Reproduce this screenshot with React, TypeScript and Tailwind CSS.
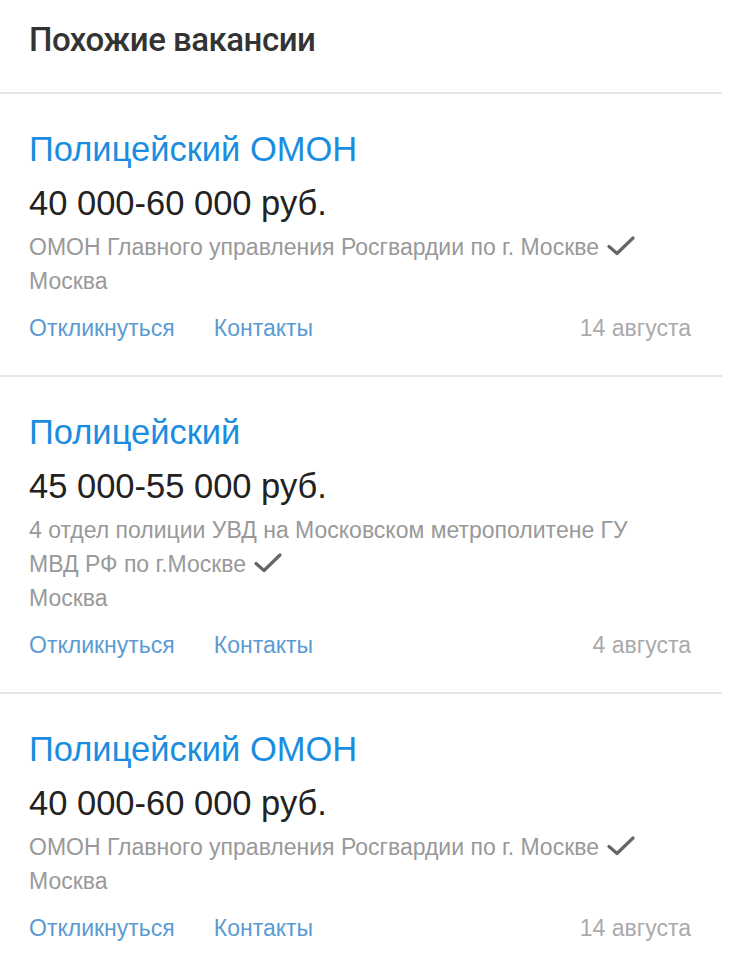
const jobs = [
  {
    title: "Полицейский ОМОН",
    salary: "40 000-60 000 руб.",
    company: "ОМОН Главного управления Росгвардии по г. Москве",
    city: "Москва",
    date: "14 августа",
  },
  {
    title: "Полицейский",
    salary: "45 000-55 000 руб.",
    company: "4 отдел полиции УВД на Московском метрополитене ГУ МВД РФ по г.Москве",
    city: "Москва",
    date: "4 августа",
  },
  {
    title: "Полицейский ОМОН",
    salary: "40 000-60 000 руб.",
    company: "ОМОН Главного управления Росгвардии по г. Москве",
    city: "Москва",
    date: "14 августа",
  },
];

function Check() {
  return (
    <svg
      className="inline-block w-[28px] h-[22px] ml-[8px] -mt-[6px] align-middle"
      viewBox="0 0 28 22"
      fill="none"
    >
      <path
        d="M2 11.5 L10 18.5 L26 3"
        stroke="#666666"
        strokeWidth="3.2"
        strokeLinecap="round"
        strokeLinejoin="round"
      />
    </svg>
  );
}

export default function App() {
  return (
    <div className="w-[750px] min-h-[966px] bg-white font-['Liberation_Sans',Arial,sans-serif]">
      <div className="w-[722px]">
        <div className="h-[92px] pl-[29px] pt-[20px]">
          <h2 className="font-['Roboto',sans-serif] font-medium text-[33px] leading-[40px] text-[#333333] tracking-[-0.5px]">
            Похожие вакансии
          </h2>
        </div>
        {jobs.map((job, i) => (
          <div key={i} className="border-t-2 border-[#e6e6e6] pl-[29px] pr-[31px] pt-[28px] pb-[30px]">
            <div className="text-[34.5px] leading-[54px] text-[#1b8de0]">{job.title}</div>
            <div className="text-[34.5px] leading-[54px] text-[#222222]">{job.salary}</div>
            <div className="text-[23px] leading-[34px] text-[#999999] pr-[40px]">
              {job.company}
              <Check />
            </div>
            <div className="text-[23px] leading-[34px] text-[#999999]">{job.city}</div>
            <div className="flex items-center mt-[13px] text-[23px] leading-[34px]">
              <span className="text-[#5b9bd3]">Откликнуться</span>
              <span className="text-[#5b9bd3] ml-[39px]">Контакты</span>
              <span className="ml-auto text-[#aaaaaa]">{job.date}</span>
            </div>
          </div>
        ))}
      </div>
    </div>
  );
}
